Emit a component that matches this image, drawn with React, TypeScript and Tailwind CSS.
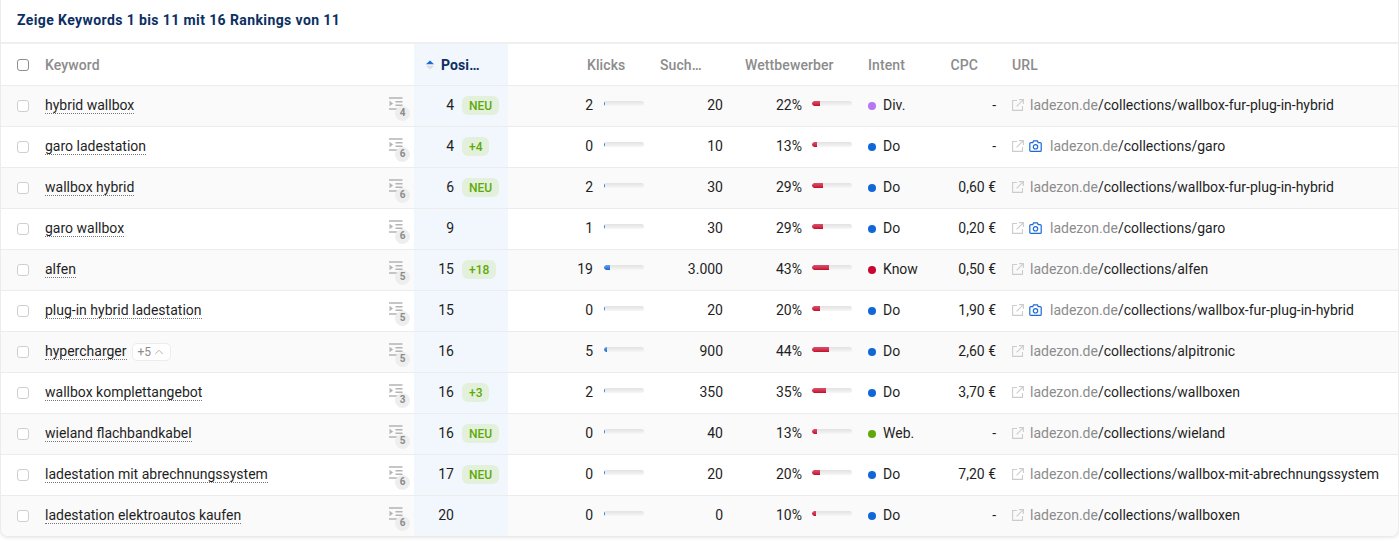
import { ChevronUp } from "lucide-react";

type Row = {
  keyword: string;
  extra?: string;
  rankings: number;
  pos: number;
  badge?: string;
  clicks: number;
  clickBar: number;
  volume: string;
  comp: number;
  intent: "Div." | "Do" | "Know" | "Web.";
  cpc: string;
  camera?: boolean;
  path: string;
};

const rows: Row[] = [
  { keyword: "hybrid wallbox", rankings: 4, pos: 4, badge: "NEU", clicks: 2, clickBar: 1, volume: "20", comp: 22, intent: "Div.", cpc: "-", path: "/collections/wallbox-fur-plug-in-hybrid" },
  { keyword: "garo ladestation", rankings: 6, pos: 4, badge: "+4", clicks: 0, clickBar: 1, volume: "10", comp: 13, intent: "Do", cpc: "-", camera: true, path: "/collections/garo" },
  { keyword: "wallbox hybrid", rankings: 6, pos: 6, badge: "NEU", clicks: 2, clickBar: 1, volume: "30", comp: 29, intent: "Do", cpc: "0,60 €", path: "/collections/wallbox-fur-plug-in-hybrid" },
  { keyword: "garo wallbox", rankings: 6, pos: 9, clicks: 1, clickBar: 1, volume: "30", comp: 29, intent: "Do", cpc: "0,20 €", camera: true, path: "/collections/garo" },
  { keyword: "alfen", rankings: 5, pos: 15, badge: "+18", clicks: 19, clickBar: 6, volume: "3.000", comp: 43, intent: "Know", cpc: "0,50 €", path: "/collections/alfen" },
  { keyword: "plug-in hybrid ladestation", rankings: 5, pos: 15, clicks: 0, clickBar: 1, volume: "20", comp: 20, intent: "Do", cpc: "1,90 €", camera: true, path: "/collections/wallbox-fur-plug-in-hybrid" },
  { keyword: "hypercharger", extra: "+5", rankings: 5, pos: 16, clicks: 5, clickBar: 3, volume: "900", comp: 44, intent: "Do", cpc: "2,60 €", path: "/collections/alpitronic" },
  { keyword: "wallbox komplettangebot", rankings: 3, pos: 16, badge: "+3", clicks: 2, clickBar: 1, volume: "350", comp: 35, intent: "Do", cpc: "3,70 €", path: "/collections/wallboxen" },
  { keyword: "wieland flachbandkabel", rankings: 5, pos: 16, badge: "NEU", clicks: 0, clickBar: 1, volume: "40", comp: 13, intent: "Web.", cpc: "-", path: "/collections/wieland" },
  { keyword: "ladestation mit abrechnungssystem", rankings: 6, pos: 17, badge: "NEU", clicks: 0, clickBar: 1, volume: "20", comp: 20, intent: "Do", cpc: "7,20 €", path: "/collections/wallbox-mit-abrechnungssystem" },
  { keyword: "ladestation elektroautos kaufen", rankings: 6, pos: 20, clicks: 0, clickBar: 1, volume: "0", comp: 10, intent: "Do", cpc: "-", path: "/collections/wallboxen" },
];

function IntentDot({ intent }: { intent: Row["intent"] }) {
  if (intent === "Div.") return <span className="mt-0.5 h-2 w-2 rounded-full bg-[#b675f5]" />;
  if (intent === "Know") return <span className="mt-0.5 h-2 w-2 rounded-full bg-[#c8082f]" />;
  if (intent === "Web.") return <span className="mt-0.5 h-2 w-2 rounded-full bg-[#5fa90a]" />;
  return <span className="mt-0.5 h-2 w-2 rounded-full bg-[#0f67d8]" />;
}

function Bar({ value, red }: { value: number; red?: boolean }) {
  return (
    <div className="mb-[3px] h-[5px] w-10 overflow-hidden rounded-[3px] bg-gradient-to-b from-[#e2e2e2] to-[#f6f6f6]">
      <div
        className={
          red
            ? "h-full rounded-l-[3px] bg-gradient-to-b from-[#d8506f] to-[#c6002b]"
            : "h-full rounded-l-[3px] bg-gradient-to-b from-[#6ba0e4] to-[#0f67d8]"
        }
        style={{ width: value }}
      />
    </div>
  );
}

function RankingsIcon({ count }: { count: number }) {
  return (
    <div className="relative mt-[5px] h-6 w-[21px]">
      <svg width="14" height="13" viewBox="0 0 14 13" className="absolute left-0 top-0 text-[#b4b4b4]">
        <path d="M0 1h13.5M6.5 4.8h7M6.5 8.3h7M0 12h13.5" stroke="currentColor" strokeWidth="1.4" fill="none" />
        <path d="M0.5 3.7l3.6 2.8-3.6 2.8z" fill="currentColor" />
      </svg>
      <span className="absolute left-[6px] top-[9px] flex h-[15px] w-[15px] items-center justify-center rounded-full bg-[#eeeeee] text-[10px] font-bold text-[#8a8a8a]">
        {count}
      </span>
    </div>
  );
}

function SortIcon() {
  return (
    <svg width="8" height="10" viewBox="0 0 8 10" className="mr-[7px]">
      <path d="M4 0.5L8 4.3H0z" fill="#1a6ad8" />
      <path d="M4 9.5L8 5.7H0z" fill="#dcdcdc" />
    </svg>
  );
}

function LinkIcon() {
  return (
    <svg width="12" height="12" viewBox="0 0 12 12" fill="none" stroke="#cccccc" strokeWidth="1.1">
      <path d="M5 1.5H0.6v9.9h9.9V7" />
      <path d="M7 0.6h4.4V5M11.2 0.8L4.6 7.4" />
    </svg>
  );
}

function CameraIcon() {
  return (
    <svg width="13" height="12" viewBox="0 0 13 12" fill="none" stroke="#1a6ad8" strokeWidth="1.2">
      <path d="M1.8 2.6h2l.8-1.8h3.8l.8 1.8h2a1 1 0 0 1 1 1v6.8a1 1 0 0 1-1 1H1.8a1 1 0 0 1-1-1V3.6a1 1 0 0 1 1-1z" />
      <circle cx="6.5" cy="6.8" r="2.2" />
    </svg>
  );
}

export default function App() {
  return (
    <div className="min-h-screen bg-white font-['Roboto',sans-serif] text-sm text-[#1f1f1f]">
      <div className="overflow-hidden rounded-b-lg border-l border-r border-[#ececec] bg-white shadow-[0_1px_4px_rgba(0,0,0,0.14)]">
        <div className="flex h-[44px] items-center border-b-2 border-[#efefef] pb-[2px] pl-4 font-bold tracking-[0.4px] text-[#0b2f63]">
          Zeige Keywords 1 bis 11 mit 16 Rankings von 11
        </div>

        {/* header */}
        <div className="flex h-[42px] border-b border-[#ececec] font-medium tracking-[0.1px] text-[#8c8c8c]">
          <div className="flex w-[413px] items-center pl-4">
            <span className="h-3 w-3 rounded-[3px] border border-[#8f8f8f]" />
            <span className="ml-4">Keyword</span>
          </div>
          <div className="flex w-[94px] items-center bg-[#f2f7fe] pl-[12px] font-bold text-[#0b2f63]">
            <SortIcon />
            <span>Posi…</span>
          </div>
          <div className="flex w-[136px] items-center pl-[79px]">Klicks</div>
          <div className="flex w-[79px] items-center pl-[16px]">Such…</div>
          <div className="flex w-[129px] items-center pl-[22px]">Wettbewerber</div>
          <div className="flex w-[84px] items-center pl-4">Intent</div>
          <div className="flex w-[60px] items-center justify-end pr-[18px]">CPC</div>
          <div className="flex items-center pl-4">URL</div>
        </div>

        {rows.map((r, i) => (
          <div
            key={r.keyword}
            className={
              (i % 2 === 0 ? "bg-[#fafafa] " : "bg-white ") +
              (i === rows.length - 1 ? "flex h-[40px]" : "flex h-[41px] border-b border-[#ececec]")
            }
          >
            <div className="flex w-[413px] items-center pl-4">
              <span className="h-3 w-3 rounded-[3px] border border-[#cfcfcf] bg-white" />
              <span className="ml-4 border-b border-dotted border-[#777] leading-[15px]">{r.keyword}</span>
              {r.extra && (
                <span className="ml-[5px] flex h-[18px] items-center rounded-[5px] border border-[#ececec] bg-white pl-[5px] pr-[4px] text-xs text-[#8c8c8c]">
                  {r.extra}
                  <ChevronUp size={14} strokeWidth={1.5} className="ml-[1px] text-[#aaaaaa]" />
                </span>
              )}
              <div className="ml-auto mr-[4px]">
                <RankingsIcon count={r.rankings} />
              </div>
            </div>
            <div className="flex w-[94px] items-center bg-[#f2f7fe] pb-[2px]">
              <span className="w-10 text-right">{r.pos}</span>
              {r.badge && (
                <span className="ml-2 mt-px flex h-[19px] items-center rounded-[6px] bg-[#e3f1dc] px-[7px] text-xs font-medium text-[#5fa90a]">
                  {r.badge}
                </span>
              )}
            </div>
            <div className="flex w-[136px] items-center pb-[2px]">
              <span className="w-[85px] text-right">{r.clicks}</span>
              <div className="ml-[11px]">
                <Bar value={r.clickBar} />
              </div>
            </div>
            <div className="flex w-[79px] items-center justify-end pb-[2px]">{r.volume}</div>
            <div className="flex w-[129px] items-center pb-[2px]">
              <span className="w-[79px] text-right">{r.comp}%</span>
              <div className="ml-[10px]">
                <Bar value={Math.floor(r.comp * 0.4)} red />
              </div>
            </div>
            <div className="flex w-[84px] items-center pb-[2px] pl-4">
              <IntentDot intent={r.intent} />
              <span className="ml-[7px]">{r.intent}</span>
            </div>
            <div className="flex w-[60px] items-center justify-end pb-[2px]">{r.cpc}</div>
            <div className="flex items-center pb-[2px] pl-4">
              <LinkIcon />
              {r.camera && (
                <span className="ml-[5px]">
                  <CameraIcon />
                </span>
              )}
              <span className={r.camera ? "ml-[8px]" : "ml-[6px]"}>
                <span className="text-[#8c8c8c]">ladezon.de</span>
                {r.path}
              </span>
            </div>
          </div>
        ))}
      </div>
    </div>
  );
}
